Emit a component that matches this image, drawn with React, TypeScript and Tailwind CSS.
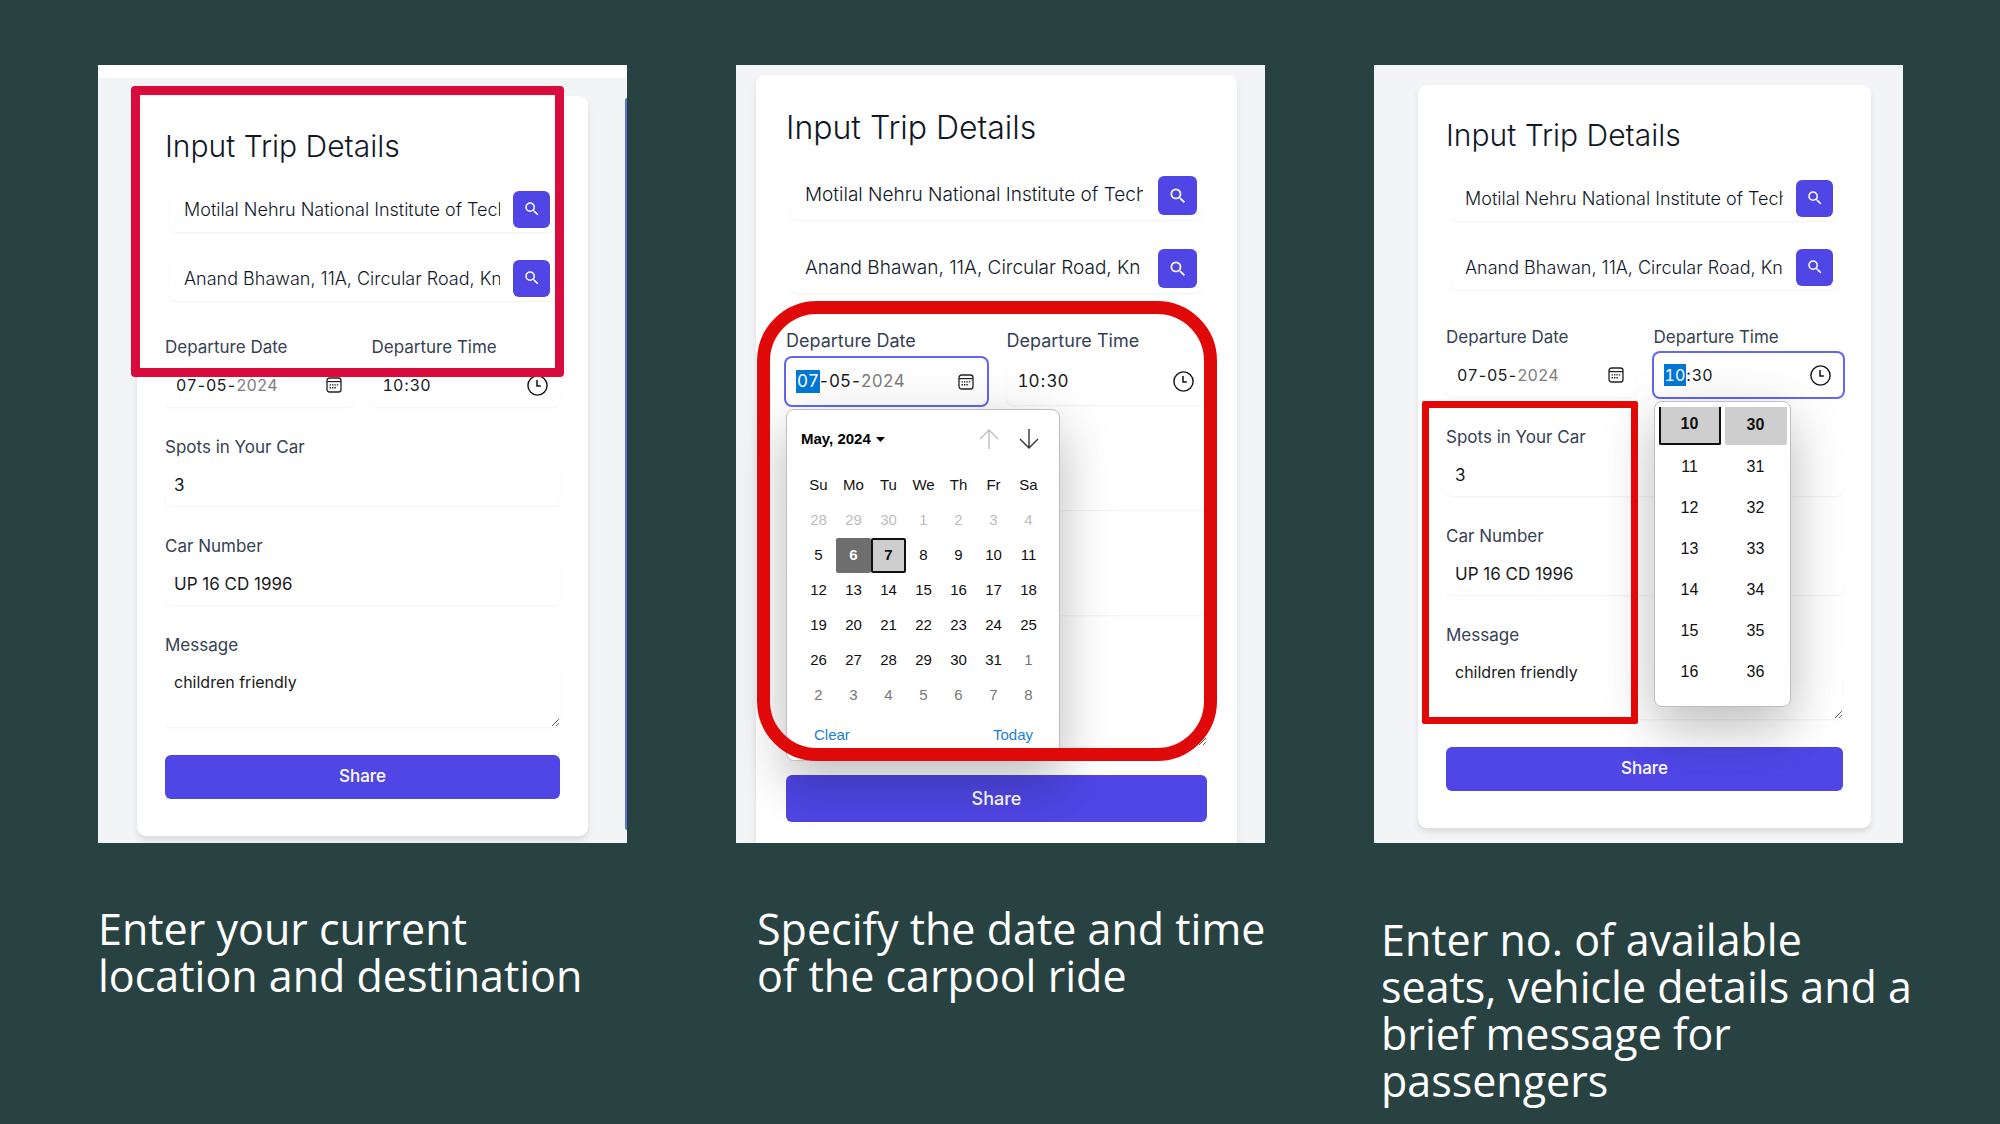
import type { ReactNode } from "react";
import clsx from "clsx";
import { MdSearch } from "react-icons/md";

type Size = "sm" | "lg";
type Picker = "date" | "time" | null;

function CalendarIcon() {
  return (
    <svg viewBox="0 0 16 16" className="size-4" fill="none" aria-hidden="true">
      <rect x="1" y="1" width="14" height="14" rx="2.6" stroke="#222" strokeWidth="1.3" />
      <path d="M1 4.600h14" stroke="#222" strokeWidth="1.2" />
      <path
        d="M3.600 7.200h1.400v1.400H3.600zM6 7.200h1.400v1.400H6zM8.400 7.200h1.400v1.400H8.400zM10.800 7.200h1.400v1.400h-1.400zM3.600 10h1.400v1.400H3.600zM6 10h1.400v1.400H6zM8.400 10h1.400v1.400H8.400z"
        fill="#222"
      />
    </svg>
  );
}

function ClockIcon() {
  return (
    <svg viewBox="0 0 21 21" className="size-[21px]" fill="none" stroke="#111" aria-hidden="true">
      <circle cx="10.5" cy="10.5" r="9.6" strokeWidth="1.4" />
      <path d="M10 5v6h3.800" strokeWidth="1.5" />
    </svg>
  );
}

function Segment({ value, label, id, size, selected, disabled }: { value: string; label: string; id?: string; size: Size; selected?: boolean; disabled?: boolean }) {
  return (
    <input
      id={id}
      aria-label={label}
      defaultValue={value}
      disabled={disabled}
      className={clsx(
        "[field-sizing:content] px-px tabular-nums outline-none",
        size === "sm" ? "h-[22px]" : "h-[23px]",
        selected ? "bg-[#0078d7] text-white" : disabled ? "text-[#7d7d7d]" : "text-[#1a1a1a]",
      )}
    />
  );
}

function PickerField({ label, id, size, focused, icon, popup, children }: { label: string; id: string; size: Size; focused: boolean; icon: ReactNode; popup?: ReactNode; children: ReactNode }) {
  const sm = size === "sm";
  return (
    <div className="relative flex flex-col gap-1">
      <label htmlFor={id} className={clsx("text-gray-700", sm ? "text-[17px] leading-6" : "text-[18px] leading-[26px]")}>
        {label}
      </label>
      <div
        className={clsx(
          "flex items-center justify-between rounded-md bg-white text-[#1a1a1a]",
          sm ? "h-[44px] pr-3 pl-[10px] text-[16px]" : "h-[47px] pr-[13px] pl-[10px] text-[17px]",
          focused ? "ring-2 ring-[#6366f1]" : "shadow-[0_1px_2px_rgba(0,0,0,0.06)]",
        )}
      >
        <div className="flex items-center">{children}</div>
        <button type="button" aria-label={`Open ${label} picker`}>
          {icon}
        </button>
      </div>
      {popup}
    </div>
  );
}

const WEEKDAYS = ["Su", "Mo", "Tu", "We", "Th", "Fr", "Sa"];
const WEEKS = [
  [28, 29, 30, 1, 2, 3, 4],
  [5, 6, 7, 8, 9, 10, 11],
  [12, 13, 14, 15, 16, 17, 18],
  [19, 20, 21, 22, 23, 24, 25],
  [26, 27, 28, 29, 30, 31, 1],
  [2, 3, 4, 5, 6, 7, 8],
];

function dayClass(week: number, day: number) {
  if (week === 0) return "text-[#bdbdbd]";
  if (week === 5 || (week === 4 && day === 1)) return "text-[#767676]";
  if (week === 1 && day === 6) return "rounded-xs bg-[#6e6e6e] font-bold text-white";
  if (week === 1 && day === 7) return "rounded-xs border-2 border-[#101010] bg-[#cecece] font-bold text-[#101010]";
  return "text-[#101010]";
}

function CalendarPopup() {
  return (
    <div className="absolute top-full left-0 z-10 mt-1 flex h-[352px] w-[274px] flex-col rounded-lg border border-[#bfbfbf] bg-white font-['Liberation_Sans',Arial,sans-serif] text-[15px] text-[#101010] shadow-[0_13px_58px_rgba(0,0,0,0.16),0_26px_46px_rgba(0,0,0,0.12)]">
      <div className="flex h-[58px] items-center justify-between pr-5 pl-[14px]">
        <button type="button" className="flex items-center gap-[5px] font-bold text-black">
          May, 2024
          <svg viewBox="0 0 9 5" className="h-[5px] w-[9px]" aria-hidden="true">
            <path d="M0 0h9L4.500 5z" />
          </svg>
        </button>
        <div className="flex gap-5">
          <button type="button" aria-label="Previous month" className="text-[#bdbdbd]" disabled>
            <svg viewBox="0 0 20 20" className="size-5" fill="none" stroke="currentColor" strokeWidth="1.4" aria-hidden="true">
              <path d="M10 20V1M1 10l9-9 9 9" />
            </svg>
          </button>
          <button type="button" aria-label="Next month" className="text-[#333]">
            <svg viewBox="0 0 20 20" className="size-5" fill="none" stroke="currentColor" strokeWidth="1.4" aria-hidden="true">
              <path d="M10 0v19M1 10l9 9 9-9" />
            </svg>
          </button>
        </div>
      </div>
      <table className="ml-[14px] w-[245px] table-fixed text-center">
        <thead>
          <tr>
            {WEEKDAYS.map((d) => (
              <th key={d} scope="col" className="h-[35px] font-normal">
                {d}
              </th>
            ))}
          </tr>
        </thead>
        <tbody>
          {WEEKS.map((week, w) => (
            <tr key={w}>
              {week.map((day) => (
                <td key={day} className="h-[35px] p-0">
                  <button type="button" disabled={w === 0} className={clsx("size-full", dayClass(w, day))}>
                    {day}
                  </button>
                </td>
              ))}
            </tr>
          ))}
        </tbody>
      </table>
      <div className="flex justify-between pt-[11px] pr-[26px] pl-[27px] text-[#1a7fd6]">
        <button type="button">Clear</button>
        <button type="button">Today</button>
      </div>
    </div>
  );
}

function TimeColumn({ label, values, active }: { label: string; values: number[]; active?: boolean }) {
  return (
    <ul aria-label={label} className="flex w-[62px] flex-col gap-[3px]">
      {values.map((v, i) => (
        <li key={v}>
          <button
            type="button"
            className={clsx(
              "h-[38px] w-full",
              i === 0 && "rounded-b-xs bg-[#cecece] pb-[3px] font-bold",
              i === 0 && active && "border-x-2 border-b-2 border-[#101010]",
            )}
          >
            {v}
          </button>
        </li>
      ))}
    </ul>
  );
}

function TimePopup() {
  return (
    <div className="absolute top-full left-0 z-10 mt-1 flex h-[306px] w-[137px] justify-center gap-1 rounded-lg border border-[#bfbfbf] bg-white pt-[5px] pl-px font-['Liberation_Sans',Arial,sans-serif] text-[16px] text-[#101010] shadow-[0_13px_58px_rgba(0,0,0,0.16),0_26px_46px_rgba(0,0,0,0.12)]">
      <TimeColumn label="Hours" values={[10, 11, 12, 13, 14, 15, 16]} active />
      <TimeColumn label="Minutes" values={[30, 31, 32, 33, 34, 35, 36]} />
    </div>
  );
}

function SearchField({ label, value, size }: { label: string; value: string; size: Size }) {
  const sm = size === "sm";
  return (
    <div
      className={clsx(
        "mr-[5px] ml-1 flex items-center rounded-lg pr-[5px] pl-[15px] shadow-[0_1px_2px_rgba(0,0,0,0.06)]",
        sm ? "h-[46px] gap-[13px]" : "h-[49px] gap-[15px]",
      )}
    >
      <input
        aria-label={label}
        defaultValue={value}
        className={clsx("min-w-0 flex-1 font-light text-gray-900 outline-none", sm ? "text-[18px]" : "text-[19px]")}
      />
      <button
        type="button"
        aria-label={`Search ${label}`}
        className={clsx("grid shrink-0 place-items-center rounded-md bg-[#4f46e5] text-white", sm ? "size-[37px]" : "size-[39px]")}
      >
        <MdSearch className={sm ? "size-[18px]" : "size-5"} />
      </button>
    </div>
  );
}

function TextField({ label, value, id, size, covered }: { label: string; value: string; id: string; size: Size; covered: boolean }) {
  const sm = size === "sm";
  return (
    <div className="flex flex-col gap-1">
      <label htmlFor={id} className={clsx("text-gray-700", sm ? "text-[17px] leading-6" : "text-[18px] leading-[26px]", covered && "invisible")}>
        {label}
      </label>
      <input
        id={id}
        defaultValue={covered ? "" : value}
        className={clsx(
          "rounded-md px-[9px] text-[#1a1a1a] shadow-[0_1px_2px_rgba(0,0,0,0.06)] outline-none",
          sm ? "h-[43px] text-[17px]" : "h-[46px] text-[18px]",
        )}
      />
    </div>
  );
}

function MessageField({ value, id, size, covered, className }: { value: string; id: string; size: Size; covered: boolean; className: string }) {
  const sm = size === "sm";
  return (
    <div className="flex flex-col gap-1">
      <label htmlFor={id} className={clsx("text-gray-700", sm ? "text-[17px] leading-6" : "text-[18px] leading-[26px]", covered && "invisible")}>
        Message
      </label>
      <textarea
        id={id}
        defaultValue={covered ? "" : value}
        className={clsx(
          "rounded-md px-[9px] py-[9px] text-[16px] leading-6 text-[#1a1a1a] shadow-[0_1px_2px_rgba(0,0,0,0.06)] outline-none",
          className,
        )}
      />
    </div>
  );
}

interface TripCardProps {
  name: string;
  size: Size;
  picker: Picker;
  className: string;
  fieldsClass: string;
  messageClass: string;
  children?: ReactNode;
}

function TripCard({ name, size, picker, className, fieldsClass, messageClass, children }: TripCardProps) {
  const sm = size === "sm";
  // The open calendar spans the text fields below it, so their text stays hidden.
  const covered = picker === "date";
  return (
    <form
      className={clsx(
        "relative flex flex-col rounded-[9px] bg-white shadow-[0_4px_6px_rgba(0,0,0,0.1)] font-[Inter,sans-serif]",
        sm ? "px-7 pt-[30px] pb-[37px]" : "px-[30px] pt-[33px] pb-[37px]",
        className,
      )}
    >
      <h2 className={clsx("leading-10 font-light text-gray-900", sm ? "text-[30px]" : "text-[32px]")}>Input Trip Details</h2>
      <div className={clsx("flex flex-col", sm ? "mt-5 gap-[23px]" : "mt-[23px] gap-6")}>
        <SearchField label="Starting point" value="Motilal Nehru National Institute of Technology" size={size} />
        <SearchField label="Destination" value="Anand Bhawan, 11A, Circular Road, Kn" size={size} />
      </div>
      <div className={clsx("flex flex-col", fieldsClass)}>
        <div className={clsx("grid grid-cols-2", sm ? "gap-[18px]" : "gap-5")}>
          <PickerField
            label="Departure Date"
            id={`${name}-day`}
            size={size}
            focused={picker === "date"}
            icon={<CalendarIcon />}
            popup={picker === "date" && <CalendarPopup />}
          >
            <Segment id={`${name}-day`} label="Day" value="07" size={size} selected={picker === "date"} />
            <span>-</span>
            <Segment label="Month" value="05" size={size} />
            <span>-</span>
            <Segment label="Year" value="2024" size={size} disabled />
          </PickerField>
          <PickerField
            label="Departure Time"
            id={`${name}-hour`}
            size={size}
            focused={picker === "time"}
            icon={<ClockIcon />}
            popup={picker === "time" && <TimePopup />}
          >
            <Segment id={`${name}-hour`} label="Hour" value="10" size={size} selected={picker === "time"} />
            <span>:</span>
            <Segment label="Minute" value="30" size={size} />
          </PickerField>
        </div>
        <TextField label="Spots in Your Car" value="3" id={`${name}-spots`} size={size} covered={covered} />
        <TextField label="Car Number" value="UP 16 CD 1996" id={`${name}-car`} size={size} covered={covered} />
        <MessageField value="children friendly" id={`${name}-message`} size={size} covered={covered} className={messageClass} />
        <button
          type="button"
          className={clsx("rounded-md bg-[#4f46e5] font-medium text-white", sm ? "h-11 text-[17px]" : "h-[47px] text-[18px]")}
        >
          Share
        </button>
      </div>
      {children}
    </form>
  );
}

function Step({ caption, captionClass, panelClass, children }: { caption: string; captionClass: string; panelClass?: string; children: ReactNode }) {
  return (
    <figure className="min-w-0">
      <div className={clsx("relative h-[778px] overflow-hidden bg-gray-100", panelClass)}>{children}</div>
      <figcaption className={clsx("font-['Open_Sans',sans-serif] text-[43px] leading-[47px] text-white", captionClass)}>{caption}</figcaption>
    </figure>
  );
}

export default function App() {
  return (
    <main className="grid min-h-screen grid-cols-3 gap-[109px] bg-[#284241] pt-[65px] pr-[97px] pl-[98px]">
      <Step caption="Enter your current location and destination" captionClass="mt-[62px]">
        <div className="h-[13px] bg-white" />
        <TripCard name="locations" size="sm" picker={null} className="mx-[39px] mt-[18px]" fieldsClass="mt-[34px] gap-7" messageClass="h-[66px]">
          <div className="pointer-events-none absolute -top-[10px] right-6 -left-[6px] h-[291px] rounded-sm border-[9px] border-[#d90b3d]" />
        </TripCard>
        <div className="absolute top-[33px] right-0 bottom-[13px] w-0.5 rounded-l-sm bg-[#5b70e2]" />
      </Step>
      <Step caption="Specify the date and time of the carpool ride" captionClass="mt-[62px] -mr-4 pl-[21px]" panelClass="pt-[10px]">
        <TripCard name="schedule" size="lg" picker="date" className="mr-7 ml-5" fieldsClass="mt-[35px] gap-[29px]" messageClass="h-[72px]">
          <div className="pointer-events-none absolute top-[226px] right-5 left-px z-20 h-[460px] rounded-[60px] border-[13px] border-[#e00909]" />
        </TripCard>
      </Step>
      <Step
        caption="Enter no. of available seats, vehicle details and a brief message for passengers"
        captionClass="mt-[73px] -mr-4 pl-[7px]"
        panelClass="pt-5"
      >
        <TripCard name="vehicle" size="sm" picker="time" className="mr-8 ml-11" fieldsClass="mt-[35px] gap-7" messageClass="h-[68px]">
          <div className="pointer-events-none absolute top-[316px] left-1 z-20 h-[323px] w-[216px] rounded-xs border-[7px] border-[#e30808]" />
        </TripCard>
      </Step>
    </main>
  );
}
